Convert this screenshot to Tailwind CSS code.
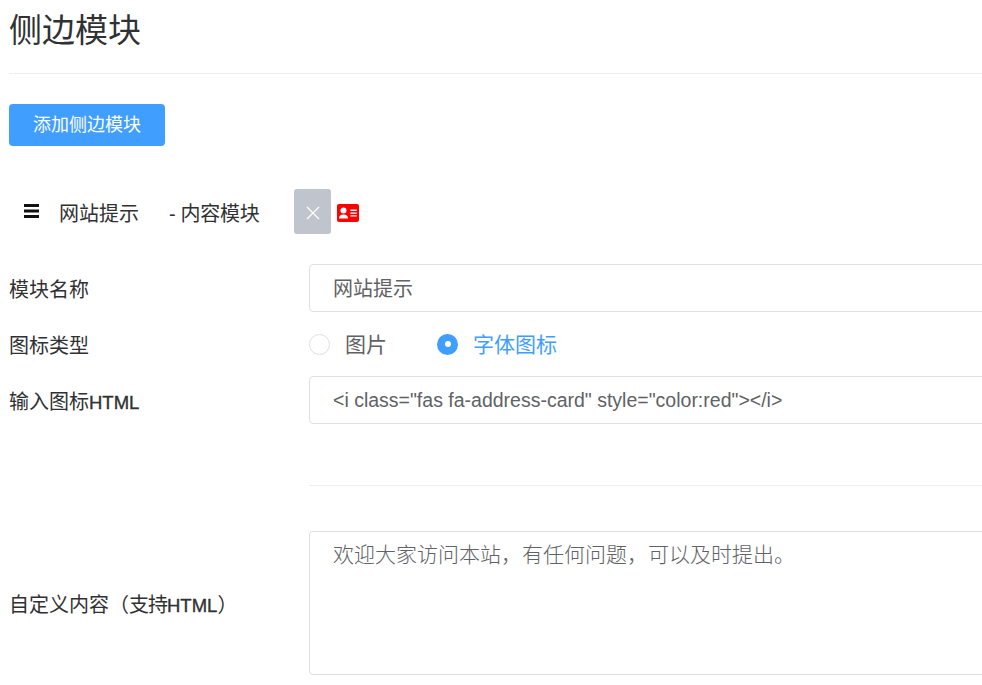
<!DOCTYPE html>
<html lang="zh-CN">
<head>
    <meta charset="UTF-8">
    <title>侧边模块</title>
    <script src="https://cdn.jsdelivr.net/npm/@tailwindcss/browser@4"></script>
</head>
<body class="bg-white overflow-hidden h-[685px] font-['Liberation_Sans','Noto_Sans_CJK_SC',sans-serif] text-[#303133]">
    <div class="pl-[9px] w-[982px] overflow-hidden">
        <div class="w-[1200px]">
        <div class="h-[74px] border-b border-[#ebeef5]">
            <h1 class="text-[33px] leading-[62px] font-normal">侧边模块</h1>
        </div>

        <button class="block mt-[30px] w-[156px] h-[42px] bg-[#409eff] text-white text-[18px] rounded">添加侧边模块</button>

        <!-- module header -->
        <div class="flex items-center mt-[43px] h-[45px] text-[20px]">
            <svg class="ml-[15px] w-[15px] h-[14px] mb-[1px]" viewBox="0 0 15 14"><path fill="#111" d="M0 0h15v3H0zM0 5.5h15v3H0zM0 11h15v3H0z"/></svg>
            <span class="ml-[20px] pt-[4px]">网站提示</span>
            <span class="ml-[30px] pt-[4px] tracking-[-0.3px]">- 内容模块</span>
            <button class="ml-[35px] w-[37px] h-[45px] bg-[#c0c4cc] rounded-[3px] flex items-center justify-center">
                <svg class="w-[14px] h-[14px] mt-[2px]" viewBox="0 0 14 14"><path d="M1 1l12 12M13 1L1 13" stroke="#fff" stroke-width="1.3" fill="none"/></svg>
            </button>
            <svg class="ml-[6px] mt-[2px] w-[22px] h-[18px]" viewBox="0 0 22 18"><rect width="22" height="18" rx="2" fill="#f00"/><circle cx="6.5" cy="6.4" r="3" fill="#fff"/><path fill="#fff" d="M2 14.6c0-2.8 1.5-4.2 4.5-4.2s4.5 1.4 4.5 4.2zM13.4 5.6h6.4v1.4h-6.4zM13.4 8.4h6.4v1.4h-6.4zM13.4 11.2h6.4v1.4h-6.4z"/></svg>
        </div>

        <!-- form -->
        <div class="flex items-center mt-[30px]">
            <label class="w-[300px] text-[20px] pt-[4px]">模块名称</label>
            <div class="w-[800px] h-[48px] pl-[23px] pt-[2px] flex items-center border border-[#dcdfe6] rounded text-[20px] text-[#606266]">网站提示</div>
        </div>
        <div class="flex items-center mt-[8px] h-[48px]">
            <label class="w-[300px] text-[20px] pt-[4px]">图标类型</label>
            <span class="w-[21px] h-[21px] rounded-full border border-[#dcdfe6] bg-white"></span>
            <span class="ml-[15px] pt-[2px] text-[21px] text-[#606266]">图片</span>
            <span class="ml-[50px] w-[21px] h-[21px] rounded-full bg-[#409eff] flex items-center justify-center"><span class="w-[6px] h-[6px] rounded-full bg-white"></span></span>
            <span class="ml-[15px] pt-[2px] text-[21px] text-[#409eff]">字体图标</span>
        </div>
        <div class="flex items-center mt-[8px]">
            <label class="w-[300px] text-[20px] pt-[4px]">输入图标<span class="text-[18.5px] [-webkit-text-stroke:0.35px]">HTML</span></label>
            <div class="w-[800px] h-[48px] pl-[23px] pt-[1px] flex items-center border border-[#dcdfe6] rounded text-[19.5px] text-[#606266]">&lt;i class="fas fa-address-card" style="color:red"&gt;&lt;/i&gt;</div>
        </div>
        <div class="ml-[300px] mt-[61px] border-t border-[#ebeef5]"></div>
        <div class="flex items-center mt-[45px]">
            <label class="w-[300px] text-[20px] pt-[4px]">自定义内容（<span class="tracking-[-1px]">支持</span><span class="text-[18.5px] [-webkit-text-stroke:0.35px]">HTML</span>）</label>
            <div class="w-[800px] h-[144px] pl-[23px] py-[6px] border border-[#dcdfe6] rounded text-[21px] leading-[30px] text-[#606266] font-['Noto_Sans_CJK_SC',serif] font-light">欢迎大家访问本站，有任何问题，可以及时提出。</div>
        </div>
        </div>
    </div>
</body>
</html>
